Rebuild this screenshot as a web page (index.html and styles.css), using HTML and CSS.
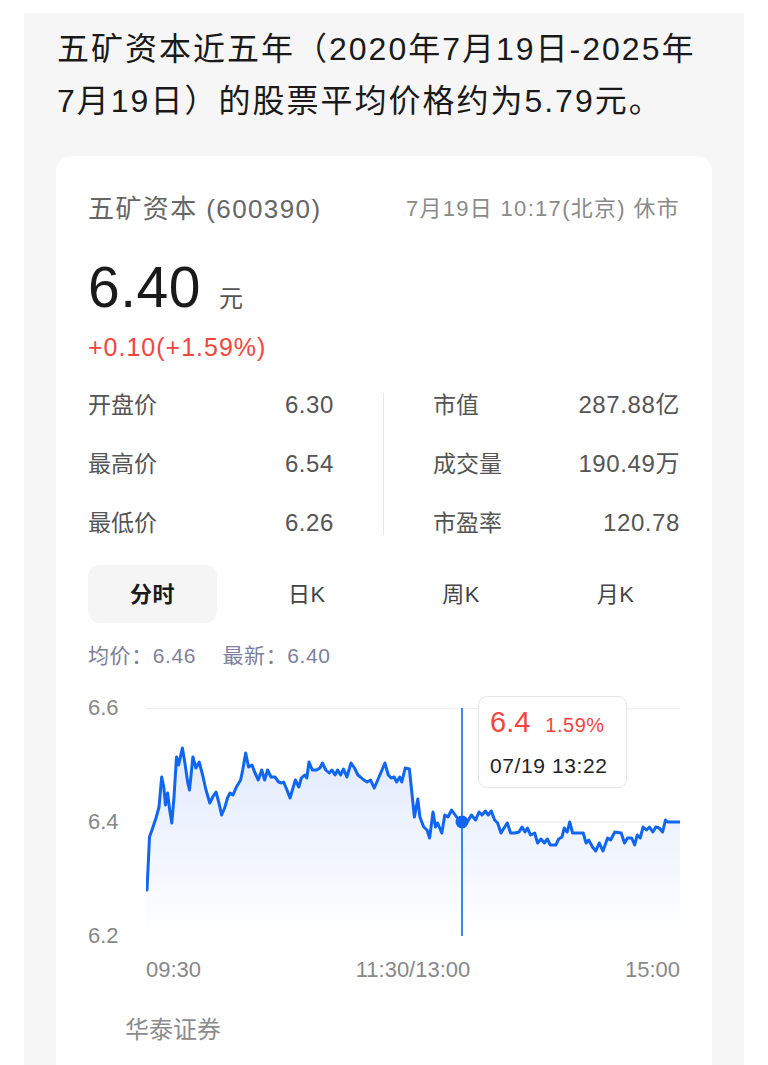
FILE: index.html
```html
<html>
<head>
    <meta charset="utf-8">
    <link rel="stylesheet" href="styles.css">
</head>
<body>
    <div class="answer">
        <p class="summary">五矿资本近五年（2020年7月19日-2025年<br>7月19日）的股票平均价格约为5.79元。</p>
        <div class="stockCard">
            <div class="cardHead">
                <span class="stockName">五矿资本 (600390)</span>
                <span class="stockTime">7月19日 10:17(北京) 休市</span>
            </div>
            <div class="price">
                <span class="priceNum">6.40</span>
                <span class="priceUnit">元</span>
            </div>
            <div class="change">+0.10(+1.59%)</div>
            <div class="stats">
                <div class="statCol">
                    <div class="stat"><span>开盘价</span><span class="statVal">6.30</span></div>
                    <div class="stat"><span>最高价</span><span class="statVal">6.54</span></div>
                    <div class="stat"><span>最低价</span><span class="statVal">6.26</span></div>
                </div>
                <div class="divider"></div>
                <div class="statCol">
                    <div class="stat"><span>市值</span><span class="statVal">287.88亿</span></div>
                    <div class="stat"><span>成交量</span><span class="statVal">190.49万</span></div>
                    <div class="stat"><span>市盈率</span><span class="statVal">120.78</span></div>
                </div>
            </div>
            <div class="tabs">
                <div class="tab active">分时</div>
                <div class="tab">日K</div>
                <div class="tab">周K</div>
                <div class="tab">月K</div>
            </div>
            <div class="avgLine">
                <span>均价：6.46</span>
                <span>最新：6.40</span>
            </div>
            <div class="chart">
                <div class="plotRow">
                    <div class="yAxis">
                        <span>6.6</span>
                        <span>6.4</span>
                        <span>6.2</span>
                    </div>
                    <div class="plot">
                        <svg width="534" height="228" viewBox="0 0 534 228">
                            <defs>
                                <linearGradient id="areaFill" x1="0" y1="0" x2="0" y2="1">
                                    <stop offset="0" stop-color="#e1eafd"/>
                                    <stop offset="1" stop-color="#ffffff"/>
                                </linearGradient>
                            </defs>
                            <line x1="0" y1="0.5" x2="534" y2="0.5" stroke="#eeeeee" stroke-width="1.5"/>
                            <line x1="0" y1="114" x2="534" y2="114" stroke="#eeeeee" stroke-width="1.5"/>
                            <line x1="0" y1="227" x2="534" y2="227" stroke="#eeeeee" stroke-width="1.5"/>
                            <path id="priceArea" fill="url(#areaFill)" d=""/>
                            <polyline id="priceLine" fill="none" stroke="#1066f0" stroke-width="3" stroke-linejoin="round" points=""/>
                            <line x1="316" y1="0" x2="316" y2="228" stroke="#1066f0" stroke-width="1.6"/>
                            <circle cx="316" cy="114" r="6.5" fill="#1066f0"/>
                        </svg>
                        <div class="tooltip">
                            <div class="tipTop"><span class="tipPrice">6.4</span><span class="tipPct">1.59%</span></div>
                            <div class="tipTime">07/19 13:22</div>
                        </div>
                    </div>
                </div>
                <div class="xAxis">
                    <span>09:30</span>
                    <span>11:30/13:00</span>
                    <span>15:00</span>
                </div>
            </div>
            <div class="source">华泰证券</div>
        </div>
    </div>
    <script>
        // intraday points, traced from the quote widget
        var pts = "0,172 1,182 3.5,129 7,119 10,110 13,99 15.7,69 17.8,79 19.5,97 21.6,85 23.7,102 25.8,115 28,89 30.5,49 32.6,57 36.4,40 38.9,55 41.8,75 43.5,82 46.9,49 49.9,60 53.2,54 56.6,67 60,82 63.8,95 66.7,89 70,84 73,95 75.6,107 78.6,100 81.5,90 84,85 87,87 90.4,79 94.6,72 96.7,62 99.7,45 102.6,59 106,57 109,65 112.3,72 115.7,62 118.6,72 121.6,62 125,69 129,69 132.6,74 135.5,75 137.6,74 141,82 144,90 147,80 149.4,72 152.8,79 155.3,70 158.7,67 160.8,70 163,54 166.3,62 170.5,62 173.9,60 176.4,55 179.8,62 183.2,65 186,62 189,67 191.6,62 194.6,67 197.5,61 200.9,69 205,55 208.5,60 211.9,67 214.4,69 217.8,72 221.2,74 224.5,72 228.3,80 232.6,70 236,62 238.9,55 242.3,67 245.2,70 248.2,69 250.7,74 253.7,69 255.8,74 259.2,60 263.4,61 266.3,89 268.4,109 271.8,91 273.9,109 277.7,119 281,122 283.6,130 287,104 289.5,119 291.6,115 295.8,125 298.8,107 302,109 305.6,102 310.6,109 316,114 321.2,114 325.4,107 329.6,112 333,104 336,107 339.3,103 342.3,107 345.3,103 348.6,112 351.6,115 355,125 358,120 361.3,115 364.6,125 368.9,125 373,124 376,119 379,124 381.5,120 384.5,127 388.7,125 391.6,135 395,131 398.4,135 401.3,131 404.3,137 409.8,137 412.7,131 416,129 418.2,120 421.2,124 423.7,114 426.6,125 430.9,125 437.2,125 440.1,135 442.7,132 446.5,139 449.8,143 453.2,135 457,143 461.6,130 464.6,132 468.8,124 475.2,125 478.5,135 481.5,130 485.7,130 488.7,137 491.2,127 494.2,130 497.1,119 500.5,122 503.5,119 506.8,124 509.8,119 513.2,120 516.6,124 519.5,112 521.6,114 534,114";
        document.getElementById("priceLine").setAttribute("points", pts);
        document.getElementById("priceArea").setAttribute("d", "M" + pts.split(" ").join(" L") + " L534,228 L0,228 Z");
    </script>
</body>
</html>
```

FILE: styles.css
```css
body {
    margin: 0;
    background-color: #ffffff;
    font-family: "Liberation Sans", "Noto Sans CJK SC", sans-serif;
}

.answer {
    margin: 13px 24px 0 24px;
    padding: 10px 32px 0 32px;
    background-color: #f6f6f6;
    min-height: 1052px;
}

.summary {
    margin: 0;
    padding-left: 1px;
    font-size: 32px;
    line-height: 52px;
    letter-spacing: 2px;
    color: #1a1a1a;
    white-space: nowrap;
}

.stockCard {
    margin-top: 29px;
    padding: 33px 32px 40px 32px;
    background-color: #ffffff;
    border-radius: 16px 16px 0 0;
}

.cardHead {
    display: flex;
    justify-content: space-between;
    align-items: center;
    height: 34px;
}
.stockName {
    font-size: 26px;
    letter-spacing: 1.4px;
    color: #666666;
}
.stockTime {
    font-size: 22px;
    letter-spacing: 1.3px;
    color: #8a8a8a;
}

.price {
    margin-top: 34px;
    display: flex;
    align-items: baseline;
    height: 60px;
}
.priceNum {
    font-size: 57px;
    line-height: 60px;
    letter-spacing: 0.5px;
    color: #1a1a1a;
}
.priceUnit {
    margin-left: 18px;
    font-size: 24px;
    color: #555555;
}

.change {
    margin-top: 15px;
    font-size: 25px;
    line-height: 30px;
    letter-spacing: 1px;
    color: #f2453d;
}

.stats {
    margin-top: 31px;
    display: grid;
    grid-template-columns: 246px 1px 1fr;
    column-gap: 49px;
}
.statCol {
    display: flex;
    flex-direction: column;
    gap: 35px;
}
.stat {
    display: flex;
    justify-content: space-between;
    font-size: 23px;
    line-height: 24px;
    color: #555555;
}
.statVal {
    font-size: 24px;
    letter-spacing: 0.6px;
}
.divider {
    background-color: #e8e8e8;
}

.tabs {
    margin-top: 30px;
    display: grid;
    grid-template-columns: repeat(4, 129px);
    justify-content: space-between;
}
.tab {
    height: 58px;
    padding-bottom: 5px;
    box-sizing: border-box;
    display: flex;
    align-items: center;
    justify-content: center;
    border-radius: 12px;
    font-size: 22px;
    letter-spacing: 0.5px;
    color: #444444;
}
.tab.active {
    background-color: #f5f5f5;
    color: #1a1a1a;
    font-weight: 600;
}

.avgLine {
    margin-top: 19px;
    font-size: 21px;
    line-height: 28px;
    letter-spacing: 0.6px;
    color: #7d809b;
}
.avgLine span + span {
    margin-left: 20px;
}

.chart {
    margin-top: 38px;
}
.plotRow {
    display: flex;
}
.yAxis {
    width: 58px;
    height: 252px;
    margin: -12px 0 -12px 0;
    display: flex;
    flex-direction: column;
    justify-content: space-between;
    font-size: 22px;
    line-height: 24px;
    color: #888888;
}
.plot {
    position: relative;
    width: 534px;
    height: 228px;
}
.plot svg {
    display: block;
}

.tooltip {
    position: absolute;
    left: 332px;
    top: -12px;
    width: 149px;
    box-sizing: border-box;
    padding: 8px 11px;
    background-color: #ffffff;
    border: 1px solid #e6e6e6;
    border-radius: 9px;
}
.tipTop {
    display: flex;
    align-items: baseline;
    height: 34px;
    color: #f2453d;
}
.tipPrice {
    font-size: 29px;
    line-height: 34px;
}
.tipPct {
    margin-left: 15px;
    font-size: 20px;
    letter-spacing: 0.5px;
}
.tipTime {
    margin-top: 14px;
    font-size: 21px;
    line-height: 26px;
    letter-spacing: 0.6px;
    color: #222222;
}

.xAxis {
    margin: 22px 0 0 58px;
    display: flex;
    justify-content: space-between;
    font-size: 22px;
    line-height: 24px;
    color: #888888;
}

.source {
    margin-top: 34px;
    padding-left: 37px;
    font-size: 24px;
    line-height: 28px;
    color: #8c8c8c;
}
```
